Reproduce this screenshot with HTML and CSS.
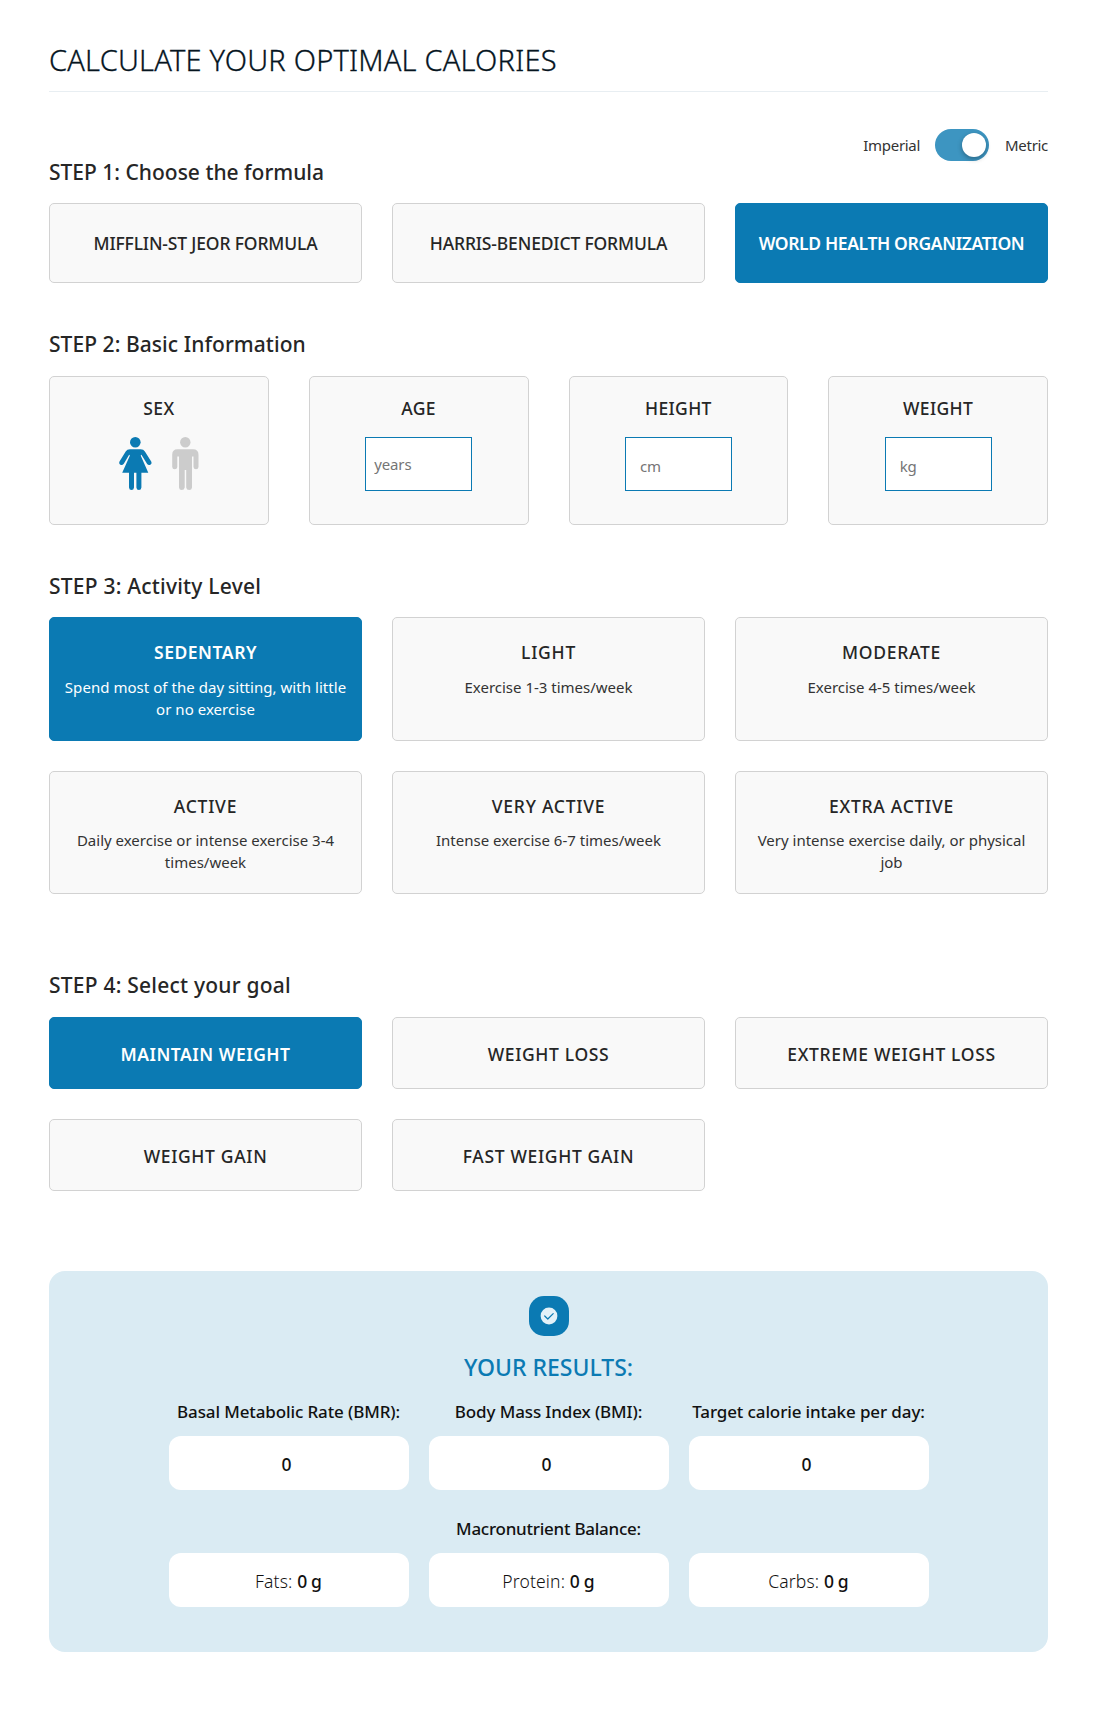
FILE: index.html
```html
<!DOCTYPE html>
<html lang="en">
<head>
<meta charset="utf-8">
<title>Calculate your optimal calories</title>
<link rel="stylesheet" href="styles.css">
</head>
<body>
<main class="page">
  <h1 class="page-title">CALCULATE YOUR OPTIMAL CALORIES</h1>

  <div class="units">
    <span class="units-label">Imperial</span>
    <span class="switch"><span class="knob"></span></span>
    <span class="units-label">Metric</span>
  </div>

  <section class="step step-formula">
    <h2 class="step-title">STEP 1: Choose the formula</h2>
    <div class="grid-3">
      <div class="card formula">MIFFLIN-ST JEOR FORMULA</div>
      <div class="card formula">HARRIS-BENEDICT FORMULA</div>
      <div class="card formula selected">WORLD HEALTH ORGANIZATION</div>
    </div>
  </section>

  <section class="step step-info">
    <h2 class="step-title">STEP 2: Basic Information</h2>
    <div class="grid-4">
      <div class="card info">
        <div class="info-title">SEX</div>
        <div class="sexes">
          <svg class="woman" width="33" height="53" viewBox="0 0 33 53">
            <circle cx="16.3" cy="5.3" r="5.3"/>
            <path d="M11 12.2H21.6Q24.6 12.2 25.9 14.6L32.2 24.6Q33.2 26.8 31.3 27.8Q29.3 28.7 28 26.7L22.6 18Q21.6 17.2 21.9 19L29.3 35.8H3.2L10.7 19Q11 17.2 10 18L4.8 26.7Q3.4 28.7 1.4 27.8Q-.4 26.8 .5 24.6L6.7 14.6Q8 12.2 11 12.2Z"/>
            <path d="M10 35H15V50.5Q14.8 53 12.5 53Q10.2 53 10 50.5ZM17.4 35H22.4V50.5Q22.2 53 19.9 53Q17.6 53 17.4 50.5Z"/>
          </svg>
          <svg class="man" width="27" height="53" viewBox="0 0 27 53">
            <circle cx="13.3" cy="5.3" r="5.2"/>
            <path d="M5.5 12.2H21Q26.5 12.2 26.5 17.7V30Q26.3 32.3 24 32.3Q21.7 32.3 21.5 30V19.5H20V50.5Q19.8 53 17.2 53Q14.6 53 14.2 50.5V33H12.7V50.5Q12.3 53 9.7 53Q7.2 53 7 50.5V19.5H5.3V30Q5 32.3 2.7 32.3Q.4 32.3 .2 30V17.7Q.2 12.2 5.5 12.2Z"/>
          </svg>
        </div>
      </div>
      <div class="card info">
        <div class="info-title">AGE</div>
        <input class="field" type="text" placeholder="years">
      </div>
      <div class="card info">
        <div class="info-title">HEIGHT</div>
        <input class="field field-unit" type="text" placeholder="cm">
      </div>
      <div class="card info">
        <div class="info-title">WEIGHT</div>
        <input class="field field-unit" type="text" placeholder="kg">
      </div>
    </div>
  </section>

  <section class="step step-activity">
    <h2 class="step-title">STEP 3: Activity Level</h2>
    <div class="grid-3">
      <div class="card activity selected"><div class="activity-title">SEDENTARY</div><p class="activity-text">Spend most of the day sitting, with little or no exercise</p></div>
      <div class="card activity"><div class="activity-title">LIGHT</div><p class="activity-text">Exercise 1-3 times/week</p></div>
      <div class="card activity"><div class="activity-title">MODERATE</div><p class="activity-text">Exercise 4-5 times/week</p></div>
      <div class="card activity"><div class="activity-title">ACTIVE</div><p class="activity-text">Daily exercise or intense exercise 3-4 times/week</p></div>
      <div class="card activity"><div class="activity-title">VERY ACTIVE</div><p class="activity-text">Intense exercise 6-7 times/week</p></div>
      <div class="card activity"><div class="activity-title">EXTRA ACTIVE</div><p class="activity-text">Very intense exercise daily, or physical job</p></div>
    </div>
  </section>

  <section class="step step-goal">
    <h2 class="step-title">STEP 4: Select your goal</h2>
    <div class="grid-3">
      <div class="card goal selected">MAINTAIN WEIGHT</div>
      <div class="card goal">WEIGHT LOSS</div>
      <div class="card goal">EXTREME WEIGHT LOSS</div>
      <div class="card goal">WEIGHT GAIN</div>
      <div class="card goal">FAST WEIGHT GAIN</div>
    </div>
  </section>

  <section class="results">
    <div class="badge">
      <svg width="18" height="18" viewBox="0 0 18 18">
        <circle class="disc" cx="9" cy="9" r="8.4"/>
        <path class="tick" d="M4.7 9L7.8 12L13.2 6.6"/>
      </svg>
    </div>
    <h2 class="results-title">YOUR RESULTS:</h2>
    <div class="results-grid">
      <div class="label">Basal Metabolic Rate (BMR):</div>
      <div class="label">Body Mass Index (BMI):</div>
      <div class="label">Target calorie intake per day:</div>
      <div class="value value-total">0</div>
      <div class="value value-total">0</div>
      <div class="value value-total">0</div>
      <div class="label label-wide">Macronutrient Balance:</div>
      <div class="value"><span>Fats: <b>0 g</b></span></div>
      <div class="value"><span>Protein: <b>0 g</b></span></div>
      <div class="value"><span>Carbs: <b>0 g</b></span></div>
    </div>
  </section>
</main>
</body>
</html>
```

FILE: styles.css
```css
* { box-sizing: border-box; }

body {
  margin: 0;
  background: #fff;
  color: #262626;
  font-family: "Noto Sans", "Open Sans", sans-serif;
}

h1, h2, p { margin: 0; }

.page {
  width: 999px;
  margin: 0 0 57px 49px;
  padding-top: 40px;
}

.page-title {
  height: 52px;
  padding-bottom: 11px;
  border-bottom: 1px solid #e8eef2;
  color: #06151f;
  font-size: 29px;
  font-weight: 350;
  line-height: 40px;
  letter-spacing: .2px;
  -webkit-text-stroke: .3px #06151f;
}

.units {
  display: flex;
  justify-content: flex-end;
  align-items: center;
  height: 32px;
  margin-top: 37px;
}

.units-label {
  color: #333;
  font-size: 15px;
  letter-spacing: -.3px;
}

.switch {
  display: flex;
  justify-content: flex-end;
  width: 54px;
  height: 32px;
  margin: 0 16px 0 15px;
  padding: 4px 3px;
  border-radius: 16px;
  background: #3d95c1;
}

.knob {
  width: 24px;
  height: 24px;
  border-radius: 50%;
  background: #fff;
  box-shadow: 0 2px 5px rgba(0, 0, 0, .3);
}

.step-formula { margin-top: -4px; }
.step-info { margin-top: 46px; }
.step-activity { margin-top: 46px; }
.step-goal { margin-top: 76px; }

.step-title {
  margin-bottom: 16px;
  font-size: 21px;
  font-weight: 500;
  line-height: 30px;
}

.step-info .step-title,
.step-goal .step-title { margin-bottom: 17px; }

.step-info .step-title { letter-spacing: .06px; }

.step-activity .step-title,
.step-goal .step-title { letter-spacing: .22px; }

.grid-3 {
  display: grid;
  grid-template-columns: repeat(3, 1fr);
  gap: 30px;
}

.grid-4 {
  display: grid;
  grid-template-columns: repeat(4, 1fr);
  gap: 40px;
}

.card {
  border: 1px solid #d2d2d2;
  border-radius: 5px;
  background: #f9f9f9;
  font-size: 17.5px;
  font-weight: 500;
  text-align: center;
}

.selected {
  border-color: #0b7ab3;
  background: #0b7ab3;
  color: #fff;
  font-weight: 600;
}

.formula, .goal {
  display: flex;
  align-items: center;
  justify-content: center;
}

.formula {
  height: 80px;
  letter-spacing: -.15px;
}

.formula.selected { letter-spacing: -.36px; }

.info {
  display: flex;
  flex-direction: column;
  align-items: center;
  height: 149px;
  padding-top: 19px;
}

.info-title {
  margin-bottom: 17px;
  line-height: 24px;
  letter-spacing: .35px;
}

.sexes {
  display: flex;
  gap: 20px;
}

.woman { fill: #0b7ab3; }
.man { fill: #ccc; }

.field {
  width: 107px;
  height: 54px;
  padding: 0 8px;
  border: 1px solid #0b7ab3;
  border-radius: 0;
  background: #fff;
  font: 400 15px "Noto Sans", sans-serif;
  letter-spacing: -.1px;
}

.field-unit { padding: 3px 14px 0; }
.field::placeholder { color: #757575; }

.activity {
  height: 123px;
  padding: 22px 12px 0;
}

.activity:nth-child(-n+3) { height: 124px; }

.activity-title {
  line-height: 24px;
  letter-spacing: .75px;
}

.selected .activity-title { letter-spacing: .55px; }

.activity-text {
  margin-top: 11px;
  color: #333;
  font-size: 15px;
  font-weight: 400;
  line-height: 22px;
}

.selected .activity-text {
  color: #fff;
  letter-spacing: .04px;
}

.activity:nth-child(-n+3) .activity-text { margin-top: 12px; }

.goal {
  height: 72px;
  padding-top: 2px;
  letter-spacing: .65px;
}

.goal.selected { letter-spacing: .5px; }

.results {
  display: flex;
  flex-direction: column;
  align-items: center;
  margin-top: 80px;
  padding: 25px 0 45px;
  border-radius: 16px;
  background: #daebf3;
  color: #111;
}

.badge {
  display: flex;
  align-items: center;
  justify-content: center;
  width: 40px;
  height: 40px;
  border-radius: 15px;
  background: #0b7ab3;
}

.disc { fill: #e3f1f8; }
.tick { fill: none; stroke: #0b7ab3; stroke-width: 1.2; stroke-linecap: round; stroke-linejoin: round; }

.results-title {
  margin: 15px 0 17px;
  color: #0b7ab3;
  font-size: 23px;
  font-weight: 500;
  line-height: 32px;
}

.results-grid {
  display: grid;
  grid-template-columns: repeat(3, 240px);
  column-gap: 20px;
}

.label {
  margin-bottom: 12px;
  font-size: 17px;
  font-weight: 500;
  line-height: 24px;
  letter-spacing: -.12px;
  text-align: center;
}

.label-wide {
  grid-column: 1 / -1;
  margin-top: 27px;
  letter-spacing: -.25px;
}

.value {
  display: flex;
  align-items: center;
  justify-content: center;
  height: 54px;
  padding-top: 2px;
  border-radius: 12px;
  background: #fff;
  font-size: 17.5px;
  font-weight: 300;
  letter-spacing: .15px;
}

.value b { font-weight: 500; word-spacing: -1px; }
.value-total { padding-right: 4px; font-weight: 500; }
```
